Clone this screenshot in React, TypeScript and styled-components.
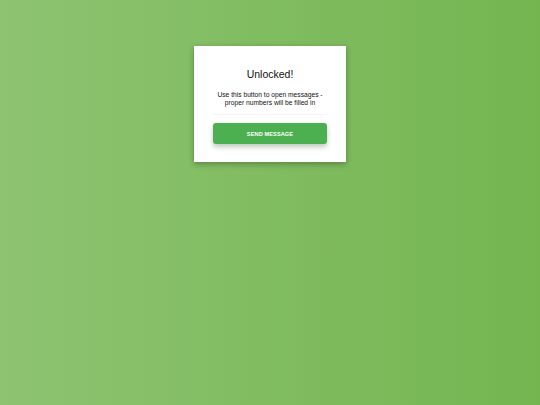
import React from "react";
import styled, { createGlobalStyle } from "styled-components";

const GlobalStyle = createGlobalStyle`
  html, body {
    margin: 0;
    padding: 0;
    height: 100%;
  }
  body {
    font-family: "Liberation Sans", Arial, sans-serif;
  }
  #root {
    height: 100%;
  }
`;

const Page = styled.div`
  min-height: 100vh;
  background: linear-gradient(90deg, #8dc371 0%, #74b550 100%);
  display: flex;
  justify-content: center;
  align-items: flex-start;
  padding-top: 46px;
  box-sizing: border-box;
`;

const Card = styled.div`
  width: 152px;
  height: 116px;
  box-sizing: border-box;
  background: #ffffff;
  box-shadow: 0 2px 6px rgba(0, 0, 0, 0.3);
  display: flex;
  flex-direction: column;
  align-items: center;
  padding: 22px 19px 0;
`;

const Title = styled.h1`
  margin: 0;
  font-size: 10.5px;
  font-weight: 400;
  color: #111;
  line-height: 13px;
`;

const Body = styled.p`
  margin: 10px 0 0;
  font-size: 6.7px;
  line-height: 8px;
  color: #111;
  text-align: center;
`;

const Divider = styled.div`
  width: 100%;
  height: 1px;
  margin-top: 7px;
  background: #f4f4f4;
`;

const SendButton = styled.button`
  margin-top: 8px;
  width: 114px;
  height: 21px;
  padding: 0;
  border: none;
  border-radius: 3px;
  background: #4caf50;
  color: #fff;
  font-family: "Liberation Sans", Arial, sans-serif;
  font-size: 5.6px;
  font-weight: 700;
  letter-spacing: 0.1px;
  box-shadow: 0 3px 5px rgba(0, 40, 0, 0.25);
  cursor: pointer;
`;

export default function App() {
  return (
    <>
      <GlobalStyle />
      <Page>
        <Card>
          <Title>Unlocked!</Title>
          <Body>
            Use this button to open messages -
            <br />
            proper numbers will be filled in
          </Body>
          <Divider />
          <SendButton>SEND MESSAGE</SendButton>
        </Card>
      </Page>
    </>
  );
}
